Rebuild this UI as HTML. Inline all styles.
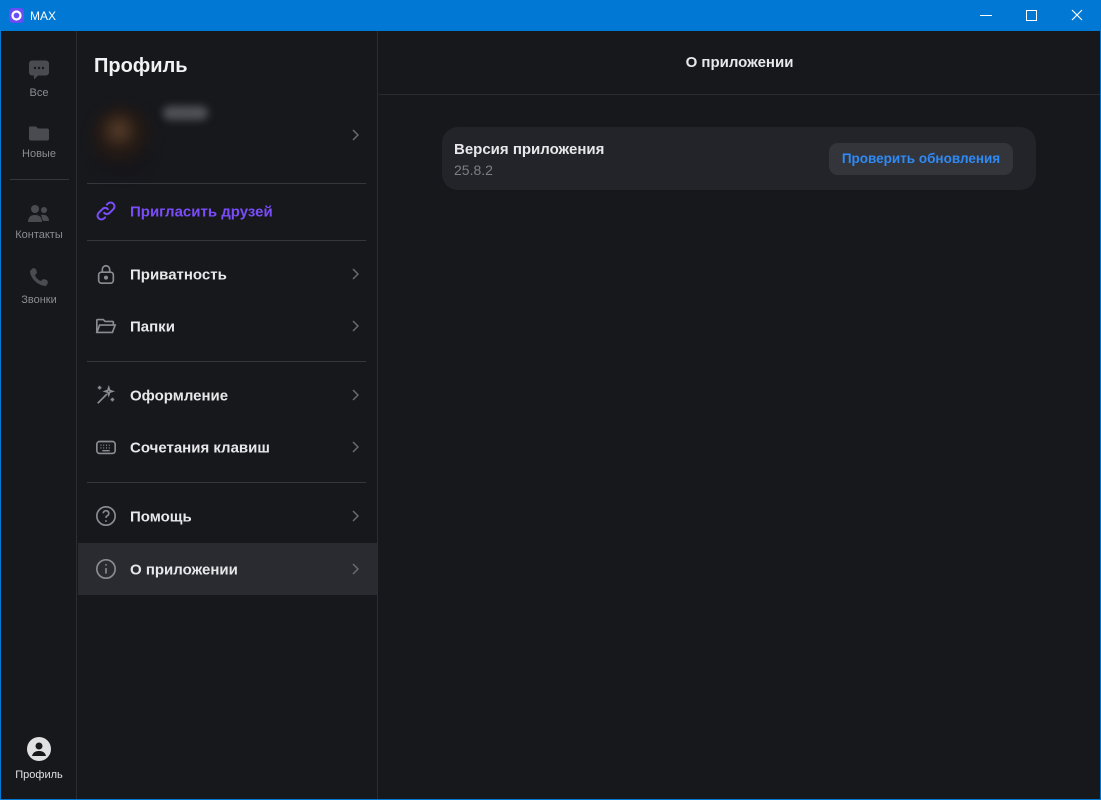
<!DOCTYPE html>
<html><head><meta charset="utf-8"><style>
*{margin:0;padding:0;box-sizing:border-box}
body{width:1101px;height:800px;overflow:hidden;background:#0078d4;font-family:"Liberation Sans",sans-serif;position:relative}
.title{position:absolute;left:0;top:0;width:1101px;height:31px;background:#0078d4;color:#fff;font-size:12px}
.app{position:absolute;left:1px;top:31px;width:1099px;height:768px;background:#17181c}
.rail{position:absolute;left:0;top:0;width:76px;height:768px;border-right:1px solid #2c2d31}
.mid{position:absolute;left:77px;top:0;width:300px;height:768px;border-right:1px solid #2c2d31}
.ri{position:absolute;left:0;width:76px;text-align:center;color:#8b8c91;font-size:11px}
.item{position:absolute;left:0;width:299px;height:52px;color:#e8e8ea;font-size:15px;font-weight:bold}
.item span{position:absolute;left:52px;top:50%;transform:translateY(-45%)}
.item svg.ic{position:absolute;left:17px;top:50%;transform:translateY(-50%)}
.chev{position:absolute;right:18px;top:50%;transform:translateY(-50%)}
.sep{position:absolute;left:9px;width:279px;height:1px;background:#36373c}
</style></head><body>
<div class="title">
<svg style="position:absolute;left:9px;top:8px" width="15" height="15" viewBox="0 0 15 15"><rect width="15" height="15" rx="4" fill="#6a4cf5"/><circle cx="7.5" cy="7.5" r="4" fill="none" stroke="#fff" stroke-width="2.2"/></svg>
<div style="position:absolute;left:30px;top:9px">MAX</div>
<svg style="position:absolute;left:980px;top:15px" width="12" height="1"><rect width="12" height="1" fill="#fff"/></svg>
<svg style="position:absolute;left:1026px;top:10px" width="11" height="11"><rect x="0.5" y="0.5" width="10" height="10" fill="none" stroke="#fff"/></svg>
<svg style="position:absolute;left:1071px;top:9px" width="12" height="12"><path d="M1 1L11 11M11 1L1 11" stroke="#fff" stroke-width="1.2"/></svg>
</div>
<div class="app">
<div class="rail">
 <div class="ri" style="top:27px"><svg width="22" height="25" viewBox="0 0 22 24"><path d="M4 2h14a3 3 0 0 1 3 3v9a3 3 0 0 1-3 3H10l-4 4v-4H4a3 3 0 0 1-3-3V5a3 3 0 0 1 3-3z" fill="#4a4b50"/><circle cx="7" cy="9.5" r="1.2" fill="#17181c"/><circle cx="11" cy="9.5" r="1.2" fill="#17181c"/><circle cx="15" cy="9.5" r="1.2" fill="#17181c"/></svg><div style="margin-top:1px">Все</div></div>
 <div class="ri" style="top:91px"><svg width="22" height="21" viewBox="0 0 22 20"><path d="M2 4h6l2 2h9a2 2 0 0 1 2 2v8a2 2 0 0 1-2 2H3a2 2 0 0 1-2-2V5a1 1 0 0 1 1-1z" fill="#4a4b50"/></svg><div style="margin-top:2px">Новые</div></div>
 <div style="position:absolute;left:9px;top:148px;width:59px;height:1px;background:#36373c"></div>
 <div class="ri" style="top:172px"><svg width="24" height="22" viewBox="0 0 24 22"><circle cx="8" cy="6" r="4" fill="#4a4b50"/><circle cx="17" cy="7" r="3" fill="#4a4b50"/><path d="M1 19c0-5 3-7 7-7s7 2 7 7z" fill="#4a4b50"/><path d="M14 12c4-1 8 1 8 6h-6z" fill="#4a4b50"/></svg><div style="margin-top:1px">Контакты</div></div>
 <div class="ri" style="top:235px"><svg width="22" height="22" viewBox="0 0 22 22"><path d="M5 2l3 1 1 4-2 2c1 3 3 5 6 6l2-2 4 1 1 3-2 3C10 20 2 12 2 5z" fill="#4a4b50"/></svg><div style="margin-top:3px">Звонки</div></div>
 <div class="ri" style="top:706px;color:#e0e0e2"><svg width="24" height="24" viewBox="0 0 24 24"><circle cx="12" cy="12" r="12" fill="#e0e0e2"/><circle cx="12" cy="9" r="3.5" fill="#17181c"/><path d="M5 19c1-4 4-5 7-5s6 1 7 5z" fill="#17181c"/></svg><div style="margin-top:5px">Профиль</div></div>
</div>
<div class="mid">
 <div style="position:absolute;left:16px;top:24px;color:#f2f2f4;font-size:20px;font-weight:bold">Профиль</div>
 <div style="position:absolute;left:14px;top:75px;width:60px;height:70px;border-radius:30px;background:radial-gradient(circle at 45% 35%,#5a3e2a 0,#241a14 35%,#15151a 70%);filter:blur(5px)"></div>
 <div style="position:absolute;left:85px;top:75px;width:45px;height:14px;border-radius:7px;background:#505156;filter:blur(4px)"></div>
 <svg class="chev" style="top:98px;transform:none" width="7" height="12" viewBox="0 0 7 12"><path d="M1 1l5 5-5 5" fill="none" stroke="#6a6b70" stroke-width="1.5"/></svg>
 <div class="sep" style="top:152px"></div>
 <div class="item" style="top:154px;color:#7b4dfa"><svg class="ic" width="22" height="22" viewBox="0 0 24 24" fill="none" stroke="#7b4dfa" stroke-width="2.2" stroke-linecap="round"><path d="M10 14a4 4 0 0 0 6 0l4-4a4 4 0 0 0-6-6l-1 1"/><path d="M14 10a4 4 0 0 0-6 0l-4 4a4 4 0 0 0 6 6l1-1"/></svg><span>Пригласить друзей</span></div>
 <div class="sep" style="top:209px"></div>
 <div class="item" style="top:217px"><svg class="ic" width="22" height="22" viewBox="0 0 24 24" fill="none" stroke="#8b8c91" stroke-width="1.8"><rect x="4" y="10" width="16" height="12" rx="3"/><path d="M8 10V7a4 4 0 0 1 8 0v3"/><circle cx="12" cy="16" r="1.3" fill="#8b8c91"/></svg><span>Приватность</span><svg class="chev" width="7" height="12" viewBox="0 0 7 12"><path d="M1 1l5 5-5 5" fill="none" stroke="#6a6b70" stroke-width="1.5"/></svg></div>
 <div class="item" style="top:269px"><svg class="ic" width="22" height="22" viewBox="0 0 24 24" fill="none" stroke="#8b8c91" stroke-width="1.8"><path d="M2 19V6a1 1 0 0 1 1-1h6l2 2h8a1 1 0 0 1 1 1v3"/><path d="M2 19l3-8h17l-3 8z"/></svg><span>Папки</span><svg class="chev" width="7" height="12" viewBox="0 0 7 12"><path d="M1 1l5 5-5 5" fill="none" stroke="#6a6b70" stroke-width="1.5"/></svg></div>
 <div class="sep" style="top:330px"></div>
 <div class="item" style="top:338px"><svg class="ic" width="22" height="22" viewBox="0 0 24 24" fill="none" stroke="#8b8c91" stroke-width="1.8"><path d="M3 21l10-10"/><path d="M15 4l1 3 3 1-3 1-1 3-1-3-3-1 3-1z"/><path d="M5 2v4M3 4h4M19 15v4M17 17h4"/></svg><span>Оформление</span><svg class="chev" width="7" height="12" viewBox="0 0 7 12"><path d="M1 1l5 5-5 5" fill="none" stroke="#6a6b70" stroke-width="1.5"/></svg></div>
 <div class="item" style="top:390px"><svg class="ic" width="22" height="22" viewBox="0 0 24 24" fill="none" stroke="#8b8c91" stroke-width="1.8"><rect x="2" y="6" width="20" height="13" rx="3"/><path d="M6 10h1M9 10h1M12 10h1M15 10h1M18 10h0M6 13h1M9 13h1M12 13h1M15 13h1M8 16h8" stroke-width="1.5"/></svg><span>Сочетания клавиш</span><svg class="chev" width="7" height="12" viewBox="0 0 7 12"><path d="M1 1l5 5-5 5" fill="none" stroke="#6a6b70" stroke-width="1.5"/></svg></div>
 <div class="sep" style="top:451px"></div>
 <div class="item" style="top:459px"><svg class="ic" width="22" height="22" viewBox="0 0 24 24" fill="none" stroke="#8b8c91" stroke-width="1.8"><circle cx="12" cy="12" r="10"/><path d="M9 9a3 3 0 1 1 4 3c-1 .5-1 1-1 2"/><circle cx="12" cy="17.5" r="1" fill="#8b8c91" stroke="none"/></svg><span>Помощь</span><svg class="chev" width="7" height="12" viewBox="0 0 7 12"><path d="M1 1l5 5-5 5" fill="none" stroke="#6a6b70" stroke-width="1.5"/></svg></div>
 <div class="item" style="top:512px;background:#2a2b31"><svg class="ic" width="22" height="22" viewBox="0 0 24 24" fill="none" stroke="#8b8c91" stroke-width="1.8"><circle cx="12" cy="12" r="10"/><path d="M12 11v6"/><circle cx="12" cy="7.5" r="1" fill="#8b8c91" stroke="none"/></svg><span>О приложении</span><svg class="chev" width="7" height="12" viewBox="0 0 7 12"><path d="M1 1l5 5-5 5" fill="none" stroke="#6a6b70" stroke-width="1.5"/></svg></div>
</div>
<div style="position:absolute;left:378px;top:0;width:721px;height:64px;border-bottom:1px solid #2a2b30;color:#e8e8ea;font-size:15px;font-weight:bold;text-align:center;line-height:64px">О приложении</div>
<div style="position:absolute;left:441px;top:96px;width:594px;height:63px;border-radius:16px;background:#232429">
 <div style="position:absolute;left:12px;top:14px;color:#e8e8ea;font-size:15px;font-weight:bold">Версия приложения</div>
 <div style="position:absolute;left:12px;top:35px;color:#7d7e83;font-size:14px">25.8.2</div>
 <div style="position:absolute;left:387px;top:16px;width:184px;height:32px;border-radius:9px;background:#34353b;color:#2e8af5;font-size:13.5px;font-weight:bold;text-align:center;line-height:32px">Проверить обновления</div>
</div>
</div>
</body></html>
